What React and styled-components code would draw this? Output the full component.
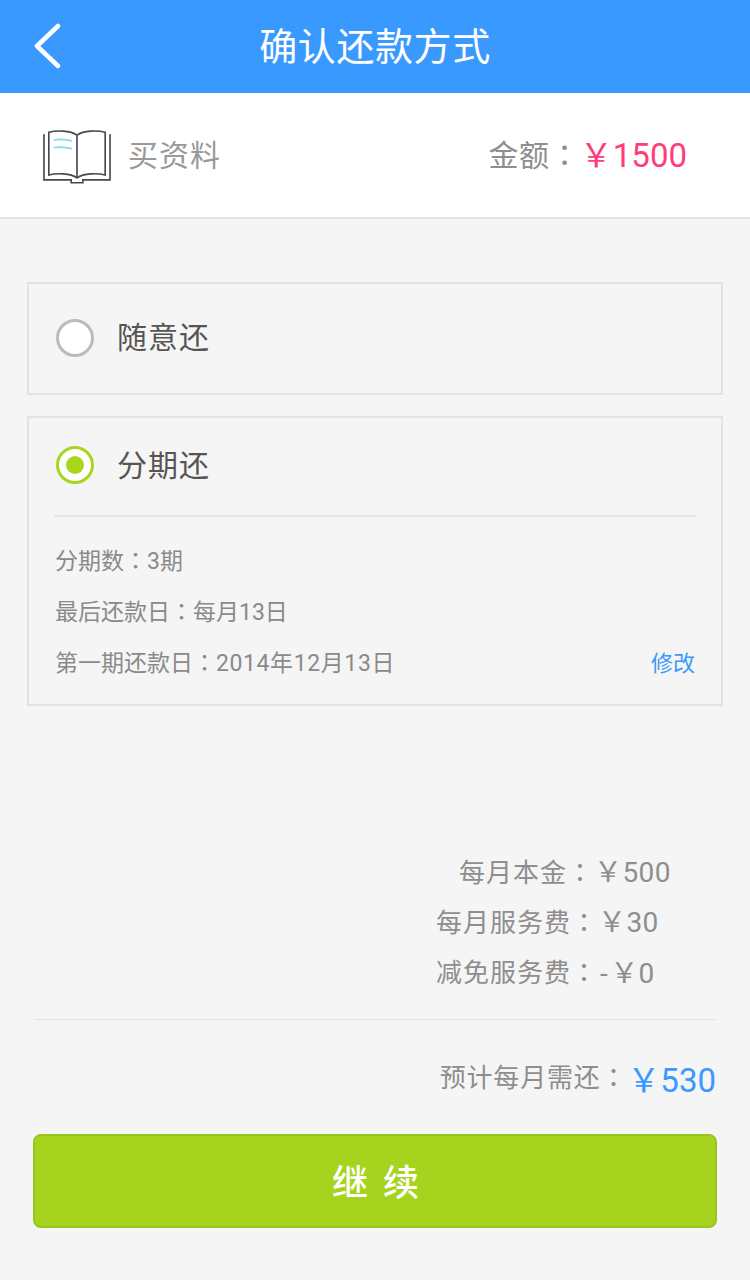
import React from 'react';
import styled, { createGlobalStyle } from 'styled-components';

const FONT = `Roboto, "Noto Sans CJK SC", sans-serif`;

const GlobalStyle = createGlobalStyle`
    html, body {
        margin: 0;
        padding: 0;
        background: #f5f5f5;
        font-family: ${FONT};
    }
    * {
        box-sizing: border-box;
    }
`

const Page = styled.div`
    width: 750px;
    height: 1280px;
    background: #f5f5f5;
    overflow: hidden;
`

// the full-width colon sits in the middle of its cell in the TC cut
const Colon = styled.span`
    font-family: "Noto Sans CJK TC", sans-serif;
`

const Header = styled.div`
    height: 93px;
    background: #3a99ff;
    display: flex;
    align-items: center;
    justify-content: center;
    position: relative;
`
const BackIcon = styled.svg`
    position: absolute;
    left: 33px;
    top: 23px;
`
const HeaderTitle = styled.div`
    color: #fff;
    font-size: 38px;
    letter-spacing: 0.6px;
    line-height: 93px;
    padding-top: 2px;
`

const Summary = styled.div`
    height: 126px;
    background: #fff;
    border-bottom: 2px solid #e4e4e4;
    padding: 0 63px 0 43px;
    display: flex;
    align-items: center;
`
const BookSlot = styled.div`
    display: flex;
    padding-top: 2px;
`
const SummaryName = styled.div`
    margin-left: 17px;
    padding-bottom: 5px;
    font-size: 30px;
    letter-spacing: 1px;
    color: #999;
    flex: 1;
`
const AmountLabel = styled.span`
    padding-bottom: 4px;
    font-size: 30px;
    letter-spacing: 0.4px;
    color: #8e8e8e;
`
const AmountValue = styled.span`
    padding-bottom: 4px;
    font-size: 33px;
    color: #ff3c78;
`

const Options = styled.div`
    padding: 63px 27px 0;
    display: flex;
    flex-direction: column;
    gap: 21px;
`
const Card = styled.div`
    border: 2px solid #e2e2e2;
    background: #f5f5f5;
    padding: 0 26px;
`
const OptionRow = styled.div`
    height: ${p => p.$height}px;
    display: flex;
    align-items: center;
    gap: 23px;
    padding: 0 0 ${p => p.$lift}px 1px;
`
const Radio = styled.div`
    width: 38px;
    height: 38px;
    border-radius: 50%;
    border: 3px solid ${p => (p.$checked ? '#a8d61f' : '#bbb')};
    background: #fff;
    display: flex;
    align-items: center;
    justify-content: center;

    &::after {
        content: '';
        display: ${p => (p.$checked ? 'block' : 'none')};
        width: 18px;
        height: 18px;
        border-radius: 50%;
        background: #a8d61f;
    }
`
const OptionLabel = styled.div`
    padding-bottom: 5px;
    font-size: 30px;
    letter-spacing: 1px;
    color: #555;
`
const Details = styled.div`
    border-top: 2px solid #e6e6e6;
    margin: 0 -1px;
    padding: 16px 1px 18px;
`
const DetailRow = styled.div`
    height: 51px;
    display: flex;
    align-items: center;
    justify-content: space-between;
    font-size: 23px;
    color: #8a8a8a;
`
const DateValue = styled.span`
    letter-spacing: 0.6px;
`
const EditLink = styled.span`
    font-size: 22px;
    color: #3a99ff;
`

const Breakdown = styled.div`
    margin-top: 139px;
    height: 151px;
    display: flex;
    flex-direction: column;
`
const BreakdownRow = styled.div`
    height: 50.5px;
    display: flex;
    align-items: center;
    padding-left: ${p => p.$left}px;
    font-size: 26px;
    letter-spacing: 1px;
    color: #8e8e8e;
    white-space: pre;
`
const Money = styled.span`
    font-size: 28px;
    letter-spacing: 0.4px;
`
const Dash = styled.span`
    padding: 0 2px;
`
const Divider = styled.div`
    margin: 23px 34px 0;
    height: 1px;
    background: #e2e2e2;
`

const Total = styled.div`
    margin: 36px 34px 0;
    height: 50px;
    padding-bottom: 6px;
    display: flex;
    align-items: center;
    justify-content: flex-end;
`
const TotalLabel = styled.span`
    font-size: 26px;
    letter-spacing: 0.8px;
    color: #8e8e8e;
    position: relative;
    top: -3px;
`
const TotalValue = styled.span`
    font-size: 33px;
    color: #3a99ff;
`

const ContinueButton = styled.button`
    display: block;
    margin: 28px 33px 0;
    width: 684px;
    height: 94px;
    border: 2px solid #98c41f;
    border-radius: 8px;
    background: #a6d41e;
    color: #fff;
    font-family: ${FONT};
    font-size: 36px;
    font-weight: 500;
    letter-spacing: 3px;
    padding: 0 0 2px 4px;
`

const BookIcon = () => (
    <svg width="68" height="55" viewBox="0 0 70 56" fill="none">
        <path d="M1 5 V52 H29 V55 H41 V52 H69 V5" stroke="#4a4a4a" strokeWidth="1.7" />
        <path d="M35 6 C28 1 14 1 6 3 V47 C14 45 28 45 35 50 C42 45 56 45 64 47 V3 C56 1 42 1 35 6 Z M35 6 V50" stroke="#4a4a4a" strokeWidth="1.7" />
        <path d="M11 11 C17 10 23 10 30 12 M11 19 C17 18 23 18 30 20" stroke="#7fdde6" strokeWidth="1.7" />
    </svg>
);

const App = () => {
    return (
        <>
            <GlobalStyle />
            <Page>
                <Header>
                    <BackIcon width="28" height="46" viewBox="0 0 28 46" fill="none">
                        <path d="M25 3 L4 23 L25 43" stroke="#fff" strokeWidth="4.5" strokeLinecap="round" strokeLinejoin="round" />
                    </BackIcon>
                    <HeaderTitle>确认还款方式</HeaderTitle>
                </Header>
                <Summary>
                    <BookSlot><BookIcon /></BookSlot>
                    <SummaryName>买资料</SummaryName>
                    <AmountLabel>金额<Colon>：</Colon></AmountLabel>
                    <AmountValue>￥1500</AmountValue>
                </Summary>
                <Options>
                    <Card>
                        <OptionRow $height={109} $lift={2}>
                            <Radio />
                            <OptionLabel>随意还</OptionLabel>
                        </OptionRow>
                    </Card>
                    <Card>
                        <OptionRow $height={97} $lift={3}>
                            <Radio $checked />
                            <OptionLabel>分期还</OptionLabel>
                        </OptionRow>
                        <Details>
                            <DetailRow><span>分期数<Colon>：</Colon>3期</span></DetailRow>
                            <DetailRow><span>最后还款日<Colon>：</Colon>每月13日</span></DetailRow>
                            <DetailRow>
                                <span>第一期还款日<Colon>：</Colon><DateValue>2014年12月13日</DateValue></span>
                                <EditLink>修改</EditLink>
                            </DetailRow>
                        </Details>
                    </Card>
                </Options>
                <Breakdown>
                    <BreakdownRow $left={459}>每月本金<Colon>：</Colon><Money>￥500</Money></BreakdownRow>
                    <BreakdownRow $left={436}>每月服务费<Colon>：</Colon><Money>￥30</Money></BreakdownRow>
                    <BreakdownRow $left={436}>减免服务费<Colon>：</Colon><Money><Dash>-</Dash>￥0</Money></BreakdownRow>
                </Breakdown>
                <Divider />
                <Total>
                    <TotalLabel>预计每月需还<Colon>：</Colon></TotalLabel>
                    <TotalValue>￥530</TotalValue>
                </Total>
                <ContinueButton>继 续</ContinueButton>
            </Page>
        </>
    )
}

export default App
